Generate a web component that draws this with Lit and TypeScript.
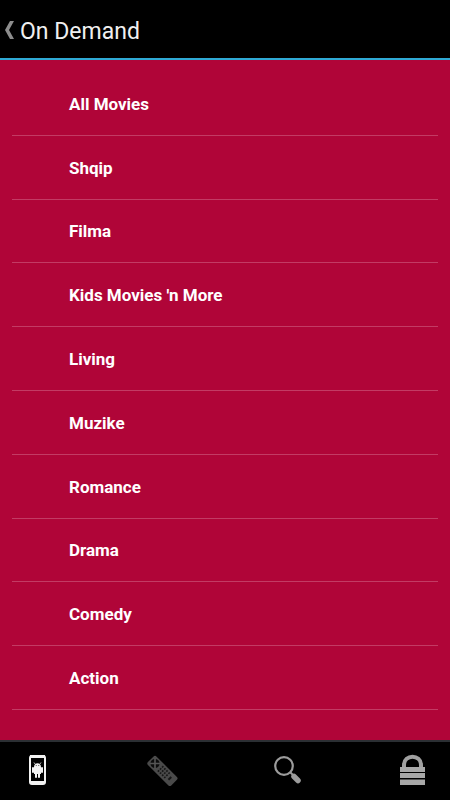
import { LitElement, html, css, svg } from "lit";
import { customElement } from "lit/decorators.js";

const categories = ["All Movies", "Shqip", "Filma", "Kids Movies 'n More", "Living", "Muzike", "Romance", "Drama", "Comedy", "Action"];

const phone = svg`
  <rect x="9" y="2" width="15" height="28" rx="2" fill="none" stroke="#f2f2f2" stroke-width="2"/>
  <path d="M9 2.500h15M9 28.500h15" stroke="#f2f2f2" stroke-width="3"/>
  <g fill="#f2f2f2">
    <path d="M13 13c0-5 7-5 7 0z"/>
    <path d="M13 13h7v7h-7z"/>
    <rect x="11" y="13" width="2" height="6" rx="1"/>
    <rect x="20" y="13" width="2" height="6" rx="1"/>
    <rect x="14" y="19" width="2" height="5" rx="1"/>
    <rect x="17" y="19" width="2" height="5" rx="1"/>
  </g>
  <path d="M14.500 10.500l-1.500-2M18.500 10.500l1.500-2" stroke="#f2f2f2" stroke-width=".8"/>
  <path d="M14.800 11.500h.8M17.400 11.500h.8" stroke="#000" stroke-width=".8"/>`;

const remote = svg`
  <g transform="translate(9 1) rotate(45)">
    <rect width="33" height="12" rx="2" fill="#4a4a4a"/>
    <circle cx="6" cy="6" r="4.600" fill="#0c0c0c"/>
    <path d="M2.500 2.500l7 7M9.500 2.500l-7 7" stroke="#555" stroke-width="1.600"/>
    <g fill="#161616">
      ${[13, 16, 19, 22].map((x) => [2, 5, 8].map((y) => svg`<rect x=${x} y=${y} width="1.600" height="1.800"/>`))}
      <path d="M26 4h2v4h-2z"/>
    </g>
  </g>`;

const search = svg`
  <circle cx="13" cy="12" r="8.800" fill="none" stroke="#9c9c9c" stroke-width="2.200"/>
  <path d="M19 18l3 3" stroke="#9c9c9c" stroke-width="2"/>
  <path d="M23 22.500l4 4" stroke="#9c9c9c" stroke-width="5.500" stroke-linecap="round"/>`;

const lock = svg`
  <path d="M8 13v-2c0-11 17-11 17 0v2" fill="none" stroke="#a0a0a0" stroke-width="4"/>
  <path d="M4 13h25v5H4zM4 19h25v5H4zM4 25.500h25V31H4z" fill="#a8a8a8"/>`;

const tabs = [
  { label: "Device", icon: phone },
  { label: "Remote", icon: remote },
  { label: "Search", icon: search },
  { label: "Parental lock", icon: lock },
];

@customElement("app-root")
class AppRoot extends LitElement {
  static styles = css`
    :host {
      display: flex;
      flex-direction: column;
      min-height: 100vh;
      background: #b00538;
      color: #fff;
      font-family: Roboto, sans-serif;
    }
    button {
      margin: 0;
      padding: 0;
      border: 0;
      background: none;
      color: inherit;
      font: inherit;
      text-align: left;
      cursor: pointer;
    }
    svg { display: block; }
    header {
      display: flex;
      align-items: center;
      height: 58px;
      background: #000;
      border-bottom: 2px solid #2fa9d4;
    }
    .back {
      display: flex;
      align-items: center;
      gap: 5px;
      padding: 6px 5px 0;
      color: #f0f0f0;
    }
    h1 { margin: 0; font-size: 23px; line-height: 28px; font-weight: 400; }
    main { flex: 1; display: flex; }
    ul {
      flex: 1;
      display: grid;
      grid-auto-rows: 1fr;
      list-style: none;
      margin: 0;
      padding: 12px 12px 30px;
    }
    li { display: flex; border-bottom: 1px solid #c33b64; }
    .category {
      flex: 1;
      padding: 1px 0 0 57px;
      font-size: 17px;
      line-height: 24px;
      font-weight: 700;
    }
    nav {
      display: flex;
      justify-content: space-between;
      padding: 12px 21px 13px;
      background: #000;
      border-top: 2px solid #2b2f33;
    }
  `;

  render() {
    return html`
      <header>
        <button class="back" aria-label="Back from On Demand">
          <svg width="10" height="24" viewBox="0 0 10 24" aria-hidden="true">
            <path d="M5 1h4L4 10l5 9H5L0 10z" fill="#8d8d8d" />
          </svg>
          <h1>On Demand</h1>
        </button>
      </header>
      <main>
        <ul>
          ${categories.map((name) => html`<li><button class="category">${name}</button></li>`)}
        </ul>
      </main>
      <nav>
        ${tabs.map(
          (tab) => html`<button aria-label=${tab.label}>
            <svg width="33" height="33" viewBox="0 0 33 33" aria-hidden="true">${tab.icon}</svg>
          </button>`,
        )}
      </nav>
    `;
  }
}
